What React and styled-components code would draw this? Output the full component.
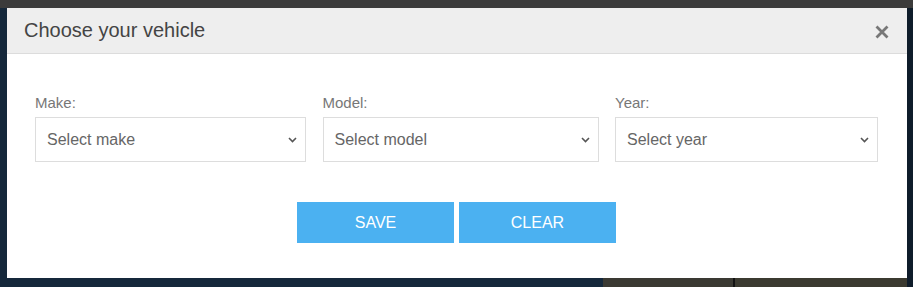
import React from 'react';
import styled, { createGlobalStyle } from 'styled-components';

const GlobalStyle = createGlobalStyle`
  html, body {
    margin: 0;
    padding: 0;
    background: #14273a;
  }
  * {
    box-sizing: border-box;
  }
`;

const Backdrop = styled.div`
  height: 287px;
  border-top: 8px solid #3b3b3b;
  padding-left: 7px;
  background: linear-gradient(
    to right,
    #15283b 0 603px,
    #3a3932 603px 733px,
    #121212 733px 735px,
    #3b3a30 735px 907px,
    #0f1c2a 907px
  );
  font-family: 'Liberation Sans', Arial, sans-serif;
`;

const Modal = styled.div`
  width: 900px;
  height: 270px;
  background: #fff;
  display: flex;
  flex-direction: column;
`;

const Header = styled.div`
  height: 46px;
  display: flex;
  align-items: center;
  justify-content: space-between;
  padding: 0 18px 0 17px;
  background: #eeeeee;
  border-bottom: 1px solid #dcdcdc;
`;

const Title = styled.h4`
  margin: 0;
  font-size: 20px;
  font-weight: normal;
  color: #444;
`;

const Close = styled.button`
  border: 0;
  padding: 0;
  margin-top: 2px;
  background: none;
  width: 14px;
  height: 14px;
  display: flex;
  cursor: pointer;
`;

const Body = styled.div`
  padding: 40px 29px 35px 28px;
`;

const Fields = styled.div`
  display: grid;
  grid-template-columns: 271px 276px 263px;
  column-gap: 16.5px;
`;

const Field = styled.label`
  display: flex;
  flex-direction: column;
`;

const Label = styled.span`
  font-size: 15px;
  line-height: 18px;
  color: #777;
  margin-bottom: 5px;
`;

const SelectBox = styled.div`
  height: 45px;
  border: 1px solid #dddddd;
  display: flex;
  align-items: center;
  padding: 0 8px 0 11px;
  color: #666;
  font-size: 16px;
`;

const SelectText = styled.span`
  flex: 1;
`;

const Buttons = styled.div`
  display: flex;
  justify-content: center;
  gap: 5px;
  margin-top: 40px;
`;

const Button = styled.button`
  width: 157px;
  height: 41px;
  border: 0;
  background: #4bb1f1;
  color: #fff;
  font-family: 'Liberation Sans', Arial, sans-serif;
  font-size: 16px;
  text-transform: uppercase;
  cursor: pointer;
`;

const Chevron = () => (
  <svg width="9" height="6" viewBox="0 0 9 6">
    <path d="M1 1l3.5 3.5L8 1" fill="none" stroke="#555" strokeWidth="1.6" />
  </svg>
);

const CloseIcon = () => (
  <svg width="14" height="14" viewBox="0 0 14 14">
    <path d="M1.5 1.5l11 11M12.5 1.5l-11 11" stroke="#777" strokeWidth="2.8" />
  </svg>
);

const fields = [
  { label: 'Make:', placeholder: 'Select make' },
  { label: 'Model:', placeholder: 'Select model' },
  { label: 'Year:', placeholder: 'Select year' },
];

export default function App() {
  return (
    <>
      <GlobalStyle />
      <Backdrop>
        <Modal>
          <Header>
            <Title>Choose your vehicle</Title>
            <Close aria-label="Close">
              <CloseIcon />
            </Close>
          </Header>
          <Body>
            <Fields>
              {fields.map((f) => (
                <Field key={f.label}>
                  <Label>{f.label}</Label>
                  <SelectBox>
                    <SelectText>{f.placeholder}</SelectText>
                    <Chevron />
                  </SelectBox>
                </Field>
              ))}
            </Fields>
            <Buttons>
              <Button>Save</Button>
              <Button>Clear</Button>
            </Buttons>
          </Body>
        </Modal>
      </Backdrop>
    </>
  );
}
